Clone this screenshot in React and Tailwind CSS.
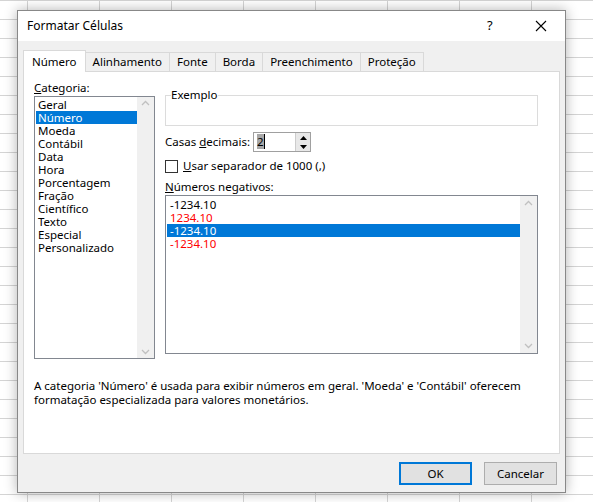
export default function App() {
  const cats = ["Geral","Número","Moeda","Contábil","Data","Hora","Porcentagem","Fração","Científico","Texto","Especial","Personalizado"];
  const neg = [["-1234.10","text-black"],["1234.10","text-[#ff0000]"],["-1234.10","sel"],["-1234.10","text-[#ff0000]"]];
  const tabs = ["Número","Alinhamento","Fonte","Borda","Preenchimento","Proteção"];
  return (
    <div className="w-[593px] h-[502px] relative overflow-hidden bg-white text-[11.5px] text-black whitespace-nowrap" style={{fontFamily:'"Noto Sans", "Open Sans", sans-serif', backgroundImage:"linear-gradient(#d4d4d4 1px, transparent 1px), linear-gradient(90deg, #d4d4d4 1px, transparent 1px)", backgroundSize:"72px 19px", backgroundPosition:"27px 0px"}}>
      <div className="absolute left-[17px] top-[10px] w-[549px] h-[483px] bg-[#f0f0f0] border border-[#888] shadow-[0_0_12px_rgba(0,0,0,0.3)] flex flex-col">
        <div className="h-[30px] bg-white flex items-center pl-[9px] text-[12px]">
          <span className="flex-1">Formatar Células</span>
          <span className="w-[14px] text-[13px] mr-[34px]">?</span>
          <svg width="12" height="12" viewBox="0 0 12 12" className="mr-[18px]"><path d="M1 1L11 11M11 1L1 11" stroke="#000" strokeWidth="1.1"/></svg>
        </div>
        <div className="flex px-[5px] mt-[8px] h-[22px] items-end">
          {tabs.map((t,i)=>(
            <div key={t} className={i===0?"h-[22px] px-[8px] bg-white border border-[#d9d9d9] border-b-0 flex items-center relative top-[1px] z-10":"h-[19px] px-[7px] border border-[#d9d9d9] border-b-0 border-l-0 flex items-center"}>{t}</div>
          ))}
        </div>
        <div className="mx-[5px] h-[383px] bg-white border border-[#d9d9d9] relative pl-[10px] pt-[8px]">
          <div className="flex gap-[10px]">
            <div className="w-[121px]">
              <div className="h-[16px] leading-[16px]"><u>C</u>ategoria:</div>
              <div className="h-[263px] border border-[#828790] flex">
                <div className="flex-1 pt-[1px] pl-[1px]">
                  {cats.map((c,i)=>(<div key={c} className={"h-[13px] leading-[13px] pl-[2px] "+(i===1?"bg-[#0078d7] text-white":"")}>{c}</div>))}
                </div>
                <div className="w-[17px] bg-[#f0f0f0] flex flex-col justify-between items-center py-[3px]">
                  <svg width="9" height="6" viewBox="0 0 9 6"><path d="M1 5L4.5 1.5L8 5" fill="none" stroke="#c0c0c0" strokeWidth="1.3"/></svg>
                  <svg width="9" height="6" viewBox="0 0 9 6"><path d="M1 1L4.5 4.5L8 1" fill="none" stroke="#c0c0c0" strokeWidth="1.3"/></svg>
                </div>
              </div>
            </div>
            <div className="w-[373px] pt-[15px]">
              <div className="h-[31px] border border-[#dcdcdc] relative">
                <span className="absolute -top-[9px] left-[5px] bg-white pr-[1px] leading-[16px]">Exemplo</span>
              </div>
              <div className="flex items-center mt-[6px] h-[20px]">
                <span className="w-[88px]">Casas <u>d</u>ecimais:</span>
                <div className="w-[58px] h-[20px] border border-[#a0a0a0] flex">
                  <div className="flex-1 pl-[3px] leading-[18px]"><span className="bg-[#a8a8a8]">2</span><span className="border-l border-black"></span></div>
                  <div className="w-[15px] border-l border-[#ccc] bg-[#e8e8e8] flex flex-col items-center justify-around">
                    <svg width="7" height="4"><path d="M0 4L3.5 0L7 4Z" fill="#000"/></svg>
                    <svg width="7" height="4"><path d="M0 0L3.5 4L7 0Z" fill="#000"/></svg>
                  </div>
                </div>
              </div>
              <div className="flex items-center mt-[7px] h-[14px]">
                <div className="w-[13px] h-[13px] border border-[#333] mr-[5px]"></div>
                <span><u>U</u>sar separador de 1000 (,)</span>
              </div>
              <div className="mt-[6px] h-[16px] leading-[16px]"><u>N</u>úmeros negativos:</div>
              <div className="h-[159px] border border-[#828790] flex">
                <div className="flex-1 pt-[2px] pl-[1px]">
                  {neg.map(([t,c],i)=>(<div key={i} className={"h-[13px] leading-[13px] pl-[3px] "+(c==="sel"?"bg-[#0078d7] text-white":c)}>{t}</div>))}
                </div>
                <div className="w-[17px] bg-[#f0f0f0] flex flex-col justify-between items-center py-[4px]">
                  <svg width="9" height="6" viewBox="0 0 9 6"><path d="M1 5L4.5 1.5L8 5" fill="none" stroke="#c0c0c0" strokeWidth="1.3"/></svg>
                  <svg width="9" height="6" viewBox="0 0 9 6"><path d="M1 1L4.5 4.5L8 1" fill="none" stroke="#c0c0c0" strokeWidth="1.3"/></svg>
                </div>
              </div>
            </div>
          </div>
          <div className="mt-[20px] leading-[14px]">
            <div>A categoria 'Número' é usada para exibir números em geral. 'Moeda' e 'Contábil' oferecem</div>
            <div>formatação especializada para valores monetários.</div>
          </div>
        </div>
        <div className="flex justify-end gap-[12px] pr-[8px] mt-[8px]">
          <div className="w-[73px] h-[23px] border-2 border-[#0078d7] bg-[#e1e1e1] flex items-center justify-center">OK</div>
          <div className="w-[73px] h-[23px] border border-[#adadad] bg-[#e1e1e1] flex items-center justify-center">Cancelar</div>
        </div>
      </div>
    </div>
  );
}
